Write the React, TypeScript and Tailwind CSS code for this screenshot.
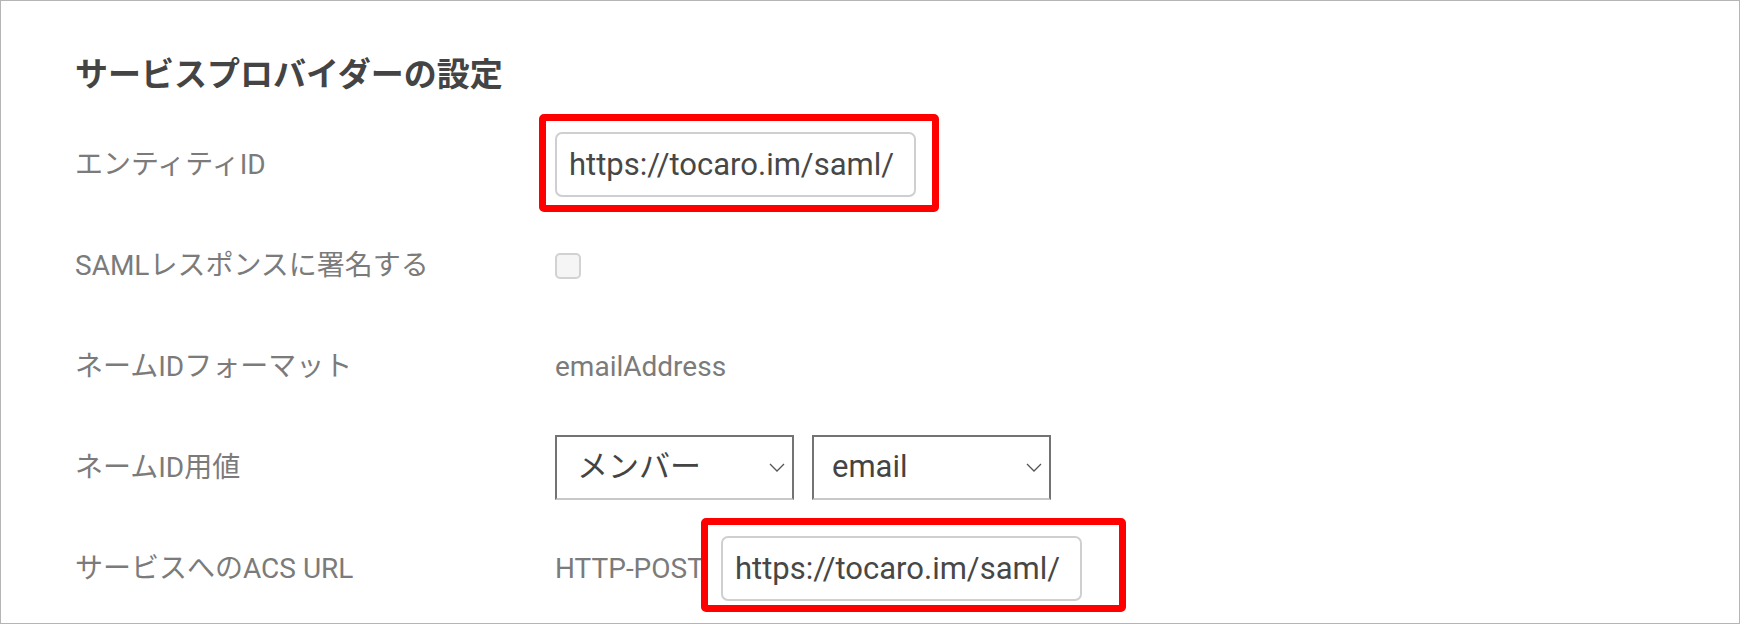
import React from "react";

const FONT = "font-[family-name:Roboto,'Noto_Sans_CJK_JP',sans-serif]";

function Chevron() {
  return (
    <svg width="16" height="9" viewBox="0 0 16 9" fill="none" className="shrink-0">
      <path d="M1 1 L8 8 L15 1" stroke="#555555" strokeWidth="1.3" />
    </svg>
  );
}

function Row({ label, children }: { label: string; children: React.ReactNode }) {
  return (
    <div className="flex items-center h-[101px]">
      <div className="w-[480px] shrink-0 text-[28px] leading-[40px] text-[#7b7b7b]">{label}</div>
      <div className="flex items-center">{children}</div>
    </div>
  );
}

function UrlInput({ box }: { box: string }) {
  return (
    <div className="relative">
      <input
        readOnly
        value="https://tocaro.im/saml/"
        className="block w-[361px] h-[65px] border-2 border-[#cfcfcf] rounded-[7px] pl-[12px] text-[31px] text-[#474747] bg-white outline-none"
      />
      <div className={"absolute pointer-events-none border-[7px] border-[#ff0000] rounded-[5px] " + box} />
    </div>
  );
}

function Select({ value, pad }: { value: string; pad: string }) {
  return (
    <div className={"w-[239px] h-[65px] border-2 border-[#737373] border-b-[#c8c8c8] flex items-center justify-between pr-[7px] text-[31px] text-[#444444] bg-white " + pad}>
      <span>{value}</span>
      <Chevron />
    </div>
  );
}

export default function App() {
  return (
    <div className={"w-[1740px] h-[624px] border border-[#b5b5b5] bg-white overflow-hidden " + FONT}>
      <div className="pl-[74px] pt-[52px]">
        <h2 className="text-[33px] font-bold leading-[44px] text-[#444444]">サービスプロバイダーの設定</h2>
        <div className="mt-[17px]">
          <Row label="エンティティID">
            <UrlInput box="left-[-16px] right-[-23px] top-[-18px] bottom-[-15px]" />
          </Row>
          <Row label="SAMLレスポンスに署名する">
            <span className="block w-[26px] h-[26px] border-2 border-[#d2d2d2] rounded-[5px] bg-[#f5f5f5]" />
          </Row>
          <Row label="ネームIDフォーマット">
            <span className="text-[28px] leading-[40px] text-[#7b7b7b]">emailAddress</span>
          </Row>
          <Row label="ネームID用値">
            <div className="flex items-center gap-[18px]">
              <Select value="メンバー" pad="pl-[20px]" />
              <Select value="email" pad="pl-[18px]" />
            </div>
          </Row>
          <Row label="サービスへのACS URL">
            <span className="w-[166px] shrink-0 text-[28px] leading-[40px] text-[#7b7b7b]">HTTP-POST</span>
            <UrlInput box="left-[-20px] right-[-44px] top-[-18px] bottom-[-11px]" />
          </Row>
        </div>
      </div>
    </div>
  );
}
